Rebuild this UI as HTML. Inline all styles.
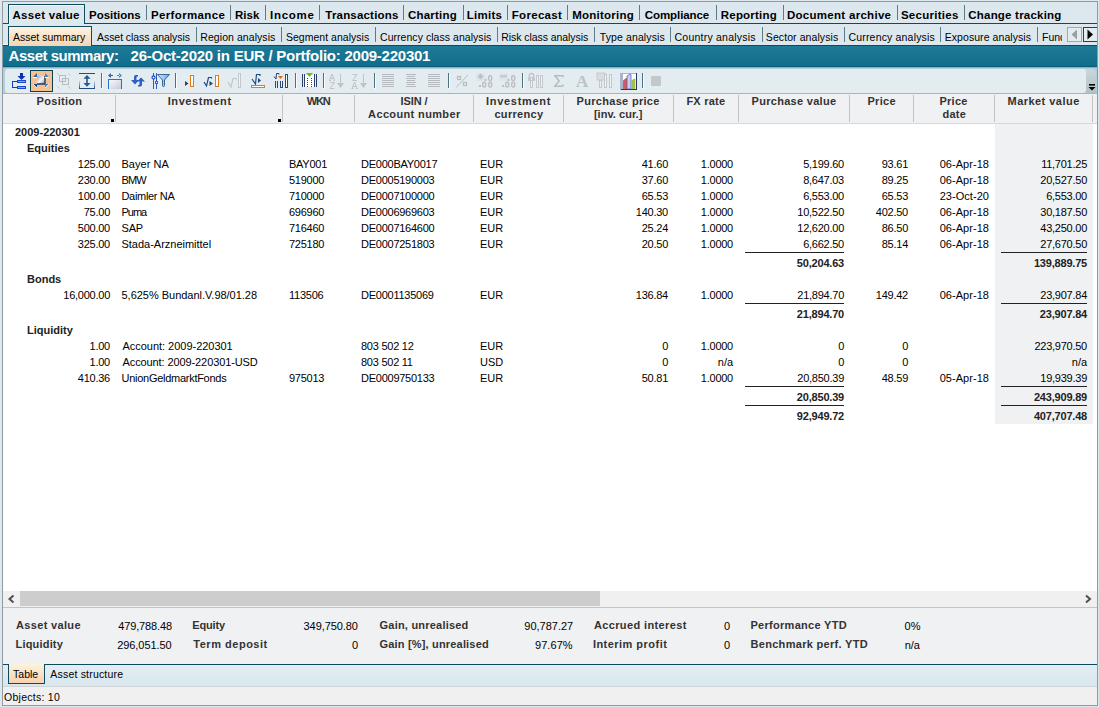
<!DOCTYPE html>
<html><head><meta charset="utf-8"><style>
html,body{margin:0;padding:0;width:1099px;height:707px;overflow:hidden;background:#dde8ee;font-family:"Liberation Sans",sans-serif;}
</style></head><body>
<div style="position:absolute;left:3px;top:23px;width:1094px;height:1px;background:#0f4b5e"></div><div style="position:absolute;left:8px;top:4px;width:77px;height:20px;background:#dde8ee;border:1px solid #0f4b5e;border-bottom:none;box-sizing:border-box;box-shadow:inset 1px 1px 0 #f4fafd;"></div><div style="position:absolute;top:8px;font:bold 11.5px/14px 'Liberation Sans',sans-serif;color:#000;white-space:nowrap;letter-spacing:0.3px;left:12.5px;">Asset value</div><div style="position:absolute;top:8px;font:bold 11.5px/14px 'Liberation Sans',sans-serif;color:#000;white-space:nowrap;left:89px;">Positions</div><div style="position:absolute;top:8px;font:bold 11.5px/14px 'Liberation Sans',sans-serif;color:#000;white-space:nowrap;letter-spacing:0.35px;left:151px;">Performance</div><div style="position:absolute;top:8px;font:bold 11.5px/14px 'Liberation Sans',sans-serif;color:#000;white-space:nowrap;left:235px;">Risk</div><div style="position:absolute;top:8px;font:bold 11.5px/14px 'Liberation Sans',sans-serif;color:#000;white-space:nowrap;letter-spacing:0.74px;left:270px;">Income</div><div style="position:absolute;top:8px;font:bold 11.5px/14px 'Liberation Sans',sans-serif;color:#000;white-space:nowrap;letter-spacing:0.191px;left:325.3px;">Transactions</div><div style="position:absolute;top:8px;font:bold 11.5px/14px 'Liberation Sans',sans-serif;color:#000;white-space:nowrap;letter-spacing:0.2px;left:408px;">Charting</div><div style="position:absolute;top:8px;font:bold 11.5px/14px 'Liberation Sans',sans-serif;color:#000;white-space:nowrap;letter-spacing:0.28px;left:466.7px;">Limits</div><div style="position:absolute;top:8px;font:bold 11.5px/14px 'Liberation Sans',sans-serif;color:#000;white-space:nowrap;letter-spacing:0.3px;left:511.79999999999995px;">Forecast</div><div style="position:absolute;top:8px;font:bold 11.5px/14px 'Liberation Sans',sans-serif;color:#000;white-space:nowrap;letter-spacing:0.233px;left:572.2px;">Monitoring</div><div style="position:absolute;top:8px;font:bold 11.5px/14px 'Liberation Sans',sans-serif;color:#000;white-space:nowrap;letter-spacing:-0.089px;left:644.8px;">Compliance</div><div style="position:absolute;top:8px;font:bold 11.5px/14px 'Liberation Sans',sans-serif;color:#000;white-space:nowrap;letter-spacing:0.2px;left:720.8px;">Reporting</div><div style="position:absolute;top:8px;font:bold 11.5px/14px 'Liberation Sans',sans-serif;color:#000;white-space:nowrap;letter-spacing:0.293px;left:786.9px;">Document archive</div><div style="position:absolute;top:8px;font:bold 11.5px/14px 'Liberation Sans',sans-serif;color:#000;white-space:nowrap;letter-spacing:0.278px;left:900.9px;">Securities</div><div style="position:absolute;top:8px;font:bold 11.5px/14px 'Liberation Sans',sans-serif;color:#000;white-space:nowrap;letter-spacing:0.207px;left:968.3px;">Change tracking</div><div style="position:absolute;left:146px;top:5px;width:1px;height:15px;background:#5e7c86"></div><div style="position:absolute;left:230px;top:5px;width:1px;height:15px;background:#5e7c86"></div><div style="position:absolute;left:265px;top:5px;width:1px;height:15px;background:#5e7c86"></div><div style="position:absolute;left:319px;top:5px;width:1px;height:15px;background:#5e7c86"></div><div style="position:absolute;left:403px;top:5px;width:1px;height:15px;background:#5e7c86"></div><div style="position:absolute;left:463px;top:5px;width:1px;height:15px;background:#5e7c86"></div><div style="position:absolute;left:507px;top:5px;width:1px;height:15px;background:#5e7c86"></div><div style="position:absolute;left:567px;top:5px;width:1px;height:15px;background:#5e7c86"></div><div style="position:absolute;left:639px;top:5px;width:1px;height:15px;background:#5e7c86"></div><div style="position:absolute;left:716px;top:5px;width:1px;height:15px;background:#5e7c86"></div><div style="position:absolute;left:783px;top:5px;width:1px;height:15px;background:#5e7c86"></div><div style="position:absolute;left:897px;top:5px;width:1px;height:15px;background:#5e7c86"></div><div style="position:absolute;left:964px;top:5px;width:1px;height:15px;background:#5e7c86"></div><div style="position:absolute;left:3px;top:45px;width:1094px;height:1px;background:#0f4b5e"></div><div style="position:absolute;left:3px;top:44px;width:5px;height:1px;background:#f6fafc"></div><div style="position:absolute;left:8px;top:26px;width:84px;height:20px;background:linear-gradient(#fdf3e0,#f7d4b4);border:1px solid #0f4b5e;border-bottom:none;box-sizing:border-box;"></div><div style="position:absolute;top:30px;font:normal 10.5px/14px 'Liberation Sans',sans-serif;color:#000;white-space:nowrap;left:13px;">Asset summary</div><div style="position:absolute;top:30px;font:normal 10.5px/14px 'Liberation Sans',sans-serif;color:#000;white-space:nowrap;letter-spacing:-0.053px;left:97px;">Asset class analysis</div><div style="position:absolute;top:30px;font:normal 10.5px/14px 'Liberation Sans',sans-serif;color:#000;white-space:nowrap;letter-spacing:0.064px;left:200.3px;">Region analysis</div><div style="position:absolute;top:30px;font:normal 10.5px/14px 'Liberation Sans',sans-serif;color:#000;white-space:nowrap;letter-spacing:0.027px;left:285.9px;">Segment analysis</div><div style="position:absolute;top:30px;font:normal 10.5px/14px 'Liberation Sans',sans-serif;color:#000;white-space:nowrap;letter-spacing:0.045px;left:380px;">Currency class analysis</div><div style="position:absolute;top:30px;font:normal 10.5px/14px 'Liberation Sans',sans-serif;color:#000;white-space:nowrap;letter-spacing:-0.061px;left:501.2px;">Risk class analysis</div><div style="position:absolute;top:30px;font:normal 10.5px/14px 'Liberation Sans',sans-serif;color:#000;white-space:nowrap;letter-spacing:0.108px;left:599.8px;">Type analysis</div><div style="position:absolute;top:30px;font:normal 10.5px/14px 'Liberation Sans',sans-serif;color:#000;white-space:nowrap;letter-spacing:0.233px;left:674.5px;">Country analysis</div><div style="position:absolute;top:30px;font:normal 10.5px/14px 'Liberation Sans',sans-serif;color:#000;white-space:nowrap;letter-spacing:0.086px;left:765.8px;">Sector analysis</div><div style="position:absolute;top:30px;font:normal 10.5px/14px 'Liberation Sans',sans-serif;color:#000;white-space:nowrap;letter-spacing:0.175px;left:848.5px;">Currency analysis</div><div style="position:absolute;top:30px;font:normal 10.5px/14px 'Liberation Sans',sans-serif;color:#000;white-space:nowrap;letter-spacing:0.069px;left:944.7px;">Exposure analysis</div><div style="position:absolute;left:1042px;top:30px;width:20px;height:14px;overflow:hidden;font:10.5px/14px 'Liberation Sans',sans-serif;white-space:nowrap">Funds</div><div style="position:absolute;left:196px;top:27px;width:1px;height:15px;background:#5e7c86"></div><div style="position:absolute;left:281px;top:27px;width:1px;height:15px;background:#5e7c86"></div><div style="position:absolute;left:375px;top:27px;width:1px;height:15px;background:#5e7c86"></div><div style="position:absolute;left:497px;top:27px;width:1px;height:15px;background:#5e7c86"></div><div style="position:absolute;left:594px;top:27px;width:1px;height:15px;background:#5e7c86"></div><div style="position:absolute;left:670px;top:27px;width:1px;height:15px;background:#5e7c86"></div><div style="position:absolute;left:762px;top:27px;width:1px;height:15px;background:#5e7c86"></div><div style="position:absolute;left:844px;top:27px;width:1px;height:15px;background:#5e7c86"></div><div style="position:absolute;left:940px;top:27px;width:1px;height:15px;background:#5e7c86"></div><div style="position:absolute;left:1037px;top:27px;width:1px;height:15px;background:#5e7c86"></div><div style="position:absolute;left:1067px;top:27px;width:15px;height:15px;border:1px solid #a0a8ac;box-sizing:border-box;background:#e4ecf0"></div><svg style="position:absolute;left:1067px;top:27px" width="15" height="15"><path d="M10 2.5 L4.5 7.5 L10 12.5Z" fill="#9a9fa2"/></svg><div style="position:absolute;left:1083px;top:27px;width:16px;height:15px;border:1px solid #0f4b5e;box-sizing:border-box;background:#e4ecf0"></div><svg style="position:absolute;left:1083px;top:27px" width="14" height="15"><path d="M4.5 2.5 L10 7.5 L4.5 12.5Z" fill="#000"/></svg><div style="position:absolute;left:3px;top:46px;width:1094px;height:21px;background:linear-gradient(#1f7b97 0px,#0f6d8c 20px,#0b5e7b 20px)"></div><div style="position:absolute;top:49px;font:bold 15px/14px 'Liberation Sans',sans-serif;color:#fff;white-space:nowrap;letter-spacing:-0.492px;left:8.6px;">Asset summary:</div><div style="position:absolute;top:49px;font:bold 15px/14px 'Liberation Sans',sans-serif;color:#fff;white-space:nowrap;letter-spacing:-0.245px;left:130.6px;">26-Oct-2020 in EUR / Portfolio: 2009-220301</div><div style="position:absolute;left:3px;top:67px;width:1094px;height:27px;background:#b3ced8"></div><div style="position:absolute;left:3px;top:67px;width:1094px;height:1px;background:#a0a9ad"></div><div style="position:absolute;left:1080px;top:69px;width:16px;height:24px;background:linear-gradient(#cbd6dc,#b3c1c8);border-radius:0 4px 0 0"></div><div style="position:absolute;left:5px;top:69px;width:1081px;height:24px;background:#e3ecf1;border-radius:3px 3px 3px 3px;"></div><div style="position:absolute;left:3px;top:93px;width:1094px;height:1px;background:#a9b3b8"></div><div style="position:absolute;left:3px;top:94px;width:1094px;height:29px;background:#f0f1f3"></div><div style="position:absolute;left:3px;top:123px;width:1094px;height:1px;background:#d8d8d8"></div><div style="position:absolute;left:115px;top:95px;width:1px;height:27px;background:#c4c4c4"></div><div style="position:absolute;left:282px;top:95px;width:1px;height:27px;background:#c4c4c4"></div><div style="position:absolute;left:354px;top:95px;width:1px;height:27px;background:#c4c4c4"></div><div style="position:absolute;left:473px;top:95px;width:1px;height:27px;background:#c4c4c4"></div><div style="position:absolute;left:563px;top:95px;width:1px;height:27px;background:#c4c4c4"></div><div style="position:absolute;left:673px;top:95px;width:1px;height:27px;background:#c4c4c4"></div><div style="position:absolute;left:738px;top:95px;width:1px;height:27px;background:#c4c4c4"></div><div style="position:absolute;left:849px;top:95px;width:1px;height:27px;background:#c4c4c4"></div><div style="position:absolute;left:913px;top:95px;width:1px;height:27px;background:#c4c4c4"></div><div style="position:absolute;left:994px;top:95px;width:1px;height:27px;background:#c4c4c4"></div><div style="position:absolute;left:1092px;top:95px;width:1px;height:27px;background:#c4c4c4"></div><div style="position:absolute;left:111px;top:119px;width:3px;height:3px;background:#000"></div><div style="position:absolute;left:278px;top:119px;width:3px;height:3px;background:#000"></div><div style="position:absolute;top:94px;font:bold 11px/14px 'Liberation Sans',sans-serif;color:#333;white-space:nowrap;letter-spacing:0.286px;left:36.6px;">Position</div><div style="position:absolute;top:94px;font:bold 11px/14px 'Liberation Sans',sans-serif;color:#333;white-space:nowrap;letter-spacing:0.589px;left:167.7px;">Investment</div><div style="position:absolute;top:94px;font:bold 11px/14px 'Liberation Sans',sans-serif;color:#333;white-space:nowrap;letter-spacing:-1.1px;left:306.7px;">WKN</div><div style="position:absolute;top:94px;font:bold 11px/14px 'Liberation Sans',sans-serif;color:#333;white-space:nowrap;letter-spacing:-0.06px;left:400.4px;">ISIN /</div><div style="position:absolute;top:107px;font:bold 11px/14px 'Liberation Sans',sans-serif;color:#333;white-space:nowrap;letter-spacing:0.362px;left:368.1px;">Account number</div><div style="position:absolute;top:94px;font:bold 11px/14px 'Liberation Sans',sans-serif;color:#333;white-space:nowrap;letter-spacing:0.7px;left:486px;">Investment</div><div style="position:absolute;top:107px;font:bold 11px/14px 'Liberation Sans',sans-serif;color:#333;white-space:nowrap;letter-spacing:0.329px;left:494.4px;">currency</div><div style="position:absolute;top:94px;font:bold 11px/14px 'Liberation Sans',sans-serif;color:#333;white-space:nowrap;letter-spacing:0.3px;left:576.6px;">Purchase price</div><div style="position:absolute;top:107px;font:bold 11px/14px 'Liberation Sans',sans-serif;color:#333;white-space:nowrap;letter-spacing:0.04px;left:593.9px;">[inv. cur.]</div><div style="position:absolute;top:94px;font:bold 11px/14px 'Liberation Sans',sans-serif;color:#333;white-space:nowrap;letter-spacing:0.233px;left:686.4px;">FX rate</div><div style="position:absolute;top:94px;font:bold 11px/14px 'Liberation Sans',sans-serif;color:#333;white-space:nowrap;letter-spacing:0.285px;left:751.6px;">Purchase value</div><div style="position:absolute;top:94px;font:bold 11px/14px 'Liberation Sans',sans-serif;color:#333;white-space:nowrap;letter-spacing:0.325px;left:867.4px;">Price</div><div style="position:absolute;top:94px;font:bold 11px/14px 'Liberation Sans',sans-serif;color:#333;white-space:nowrap;letter-spacing:0.25px;left:939.5px;">Price</div><div style="position:absolute;top:107px;font:bold 11px/14px 'Liberation Sans',sans-serif;color:#333;white-space:nowrap;letter-spacing:0.3px;left:942.4px;">date</div><div style="position:absolute;top:94px;font:bold 11px/14px 'Liberation Sans',sans-serif;color:#333;white-space:nowrap;letter-spacing:0.464px;left:1007.5px;">Market value</div><div style="position:absolute;left:3px;top:124px;width:1094px;height:467px;background:#fff"></div><div style="position:absolute;left:995px;top:124px;width:98px;height:300px;background:#f0f1f3"></div><div style="position:absolute;top:125px;font:bold 11px/14px 'Liberation Sans',sans-serif;color:#222;white-space:nowrap;left:15px;">2009-220301</div><div style="position:absolute;top:141px;font:bold 11px/14px 'Liberation Sans',sans-serif;color:#222;white-space:nowrap;left:27px;">Equities</div><div style="position:absolute;top:157px;font:normal 11px/14px 'Liberation Sans',sans-serif;color:#000;white-space:nowrap;letter-spacing:-0.25px;right:989px;">125.00</div><div style="position:absolute;top:157px;font:normal 11px/14px 'Liberation Sans',sans-serif;color:#000;white-space:nowrap;letter-spacing:0.029px;left:121.5px;">Bayer NA</div><div style="position:absolute;top:157px;font:normal 11px/14px 'Liberation Sans',sans-serif;color:#000;white-space:nowrap;letter-spacing:-0.25px;left:289px;">BAY001</div><div style="position:absolute;top:157px;font:normal 11px/14px 'Liberation Sans',sans-serif;color:#000;white-space:nowrap;letter-spacing:-0.25px;left:361px;">DE000BAY0017</div><div style="position:absolute;top:157px;font:normal 11px/14px 'Liberation Sans',sans-serif;color:#000;white-space:nowrap;letter-spacing:-0.05px;left:480px;">EUR</div><div style="position:absolute;top:157px;font:normal 11px/14px 'Liberation Sans',sans-serif;color:#000;white-space:nowrap;letter-spacing:-0.25px;right:431px;">41.60</div><div style="position:absolute;top:157px;font:normal 11px/14px 'Liberation Sans',sans-serif;color:#000;white-space:nowrap;letter-spacing:-0.25px;right:366px;">1.0000</div><div style="position:absolute;top:157px;font:normal 11px/14px 'Liberation Sans',sans-serif;color:#000;white-space:nowrap;letter-spacing:-0.25px;right:255px;">5,199.60</div><div style="position:absolute;top:157px;font:normal 11px/14px 'Liberation Sans',sans-serif;color:#000;white-space:nowrap;letter-spacing:-0.25px;right:191px;">93.61</div><div style="position:absolute;top:157px;font:normal 11px/14px 'Liberation Sans',sans-serif;color:#000;white-space:nowrap;letter-spacing:0.05px;right:110px;">06-Apr-18</div><div style="position:absolute;top:157px;font:normal 11px/14px 'Liberation Sans',sans-serif;color:#000;white-space:nowrap;letter-spacing:-0.25px;right:12px;">11,701.25</div><div style="position:absolute;top:173px;font:normal 11px/14px 'Liberation Sans',sans-serif;color:#000;white-space:nowrap;letter-spacing:-0.25px;right:989px;">230.00</div><div style="position:absolute;top:173px;font:normal 11px/14px 'Liberation Sans',sans-serif;color:#000;white-space:nowrap;letter-spacing:-0.9px;left:121.5px;">BMW</div><div style="position:absolute;top:173px;font:normal 11px/14px 'Liberation Sans',sans-serif;color:#000;white-space:nowrap;letter-spacing:-0.25px;left:289px;">519000</div><div style="position:absolute;top:173px;font:normal 11px/14px 'Liberation Sans',sans-serif;color:#000;white-space:nowrap;letter-spacing:-0.25px;left:361px;">DE0005190003</div><div style="position:absolute;top:173px;font:normal 11px/14px 'Liberation Sans',sans-serif;color:#000;white-space:nowrap;letter-spacing:-0.05px;left:480px;">EUR</div><div style="position:absolute;top:173px;font:normal 11px/14px 'Liberation Sans',sans-serif;color:#000;white-space:nowrap;letter-spacing:-0.25px;right:431px;">37.60</div><div style="position:absolute;top:173px;font:normal 11px/14px 'Liberation Sans',sans-serif;color:#000;white-space:nowrap;letter-spacing:-0.25px;right:366px;">1.0000</div><div style="position:absolute;top:173px;font:normal 11px/14px 'Liberation Sans',sans-serif;color:#000;white-space:nowrap;letter-spacing:-0.25px;right:255px;">8,647.03</div><div style="position:absolute;top:173px;font:normal 11px/14px 'Liberation Sans',sans-serif;color:#000;white-space:nowrap;letter-spacing:-0.25px;right:191px;">89.25</div><div style="position:absolute;top:173px;font:normal 11px/14px 'Liberation Sans',sans-serif;color:#000;white-space:nowrap;letter-spacing:0.05px;right:110px;">06-Apr-18</div><div style="position:absolute;top:173px;font:normal 11px/14px 'Liberation Sans',sans-serif;color:#000;white-space:nowrap;letter-spacing:-0.25px;right:12px;">20,527.50</div><div style="position:absolute;top:189px;font:normal 11px/14px 'Liberation Sans',sans-serif;color:#000;white-space:nowrap;letter-spacing:-0.25px;right:989px;">100.00</div><div style="position:absolute;top:189px;font:normal 11px/14px 'Liberation Sans',sans-serif;color:#000;white-space:nowrap;letter-spacing:-0.322px;left:121.5px;">Daimler NA</div><div style="position:absolute;top:189px;font:normal 11px/14px 'Liberation Sans',sans-serif;color:#000;white-space:nowrap;letter-spacing:-0.25px;left:289px;">710000</div><div style="position:absolute;top:189px;font:normal 11px/14px 'Liberation Sans',sans-serif;color:#000;white-space:nowrap;letter-spacing:-0.25px;left:361px;">DE0007100000</div><div style="position:absolute;top:189px;font:normal 11px/14px 'Liberation Sans',sans-serif;color:#000;white-space:nowrap;letter-spacing:-0.05px;left:480px;">EUR</div><div style="position:absolute;top:189px;font:normal 11px/14px 'Liberation Sans',sans-serif;color:#000;white-space:nowrap;letter-spacing:-0.25px;right:431px;">65.53</div><div style="position:absolute;top:189px;font:normal 11px/14px 'Liberation Sans',sans-serif;color:#000;white-space:nowrap;letter-spacing:-0.25px;right:366px;">1.0000</div><div style="position:absolute;top:189px;font:normal 11px/14px 'Liberation Sans',sans-serif;color:#000;white-space:nowrap;letter-spacing:-0.25px;right:255px;">6,553.00</div><div style="position:absolute;top:189px;font:normal 11px/14px 'Liberation Sans',sans-serif;color:#000;white-space:nowrap;letter-spacing:-0.25px;right:191px;">65.53</div><div style="position:absolute;top:189px;font:normal 11px/14px 'Liberation Sans',sans-serif;color:#000;white-space:nowrap;letter-spacing:0.05px;right:110px;">23-Oct-20</div><div style="position:absolute;top:189px;font:normal 11px/14px 'Liberation Sans',sans-serif;color:#000;white-space:nowrap;letter-spacing:-0.25px;right:12px;">6,553.00</div><div style="position:absolute;top:205px;font:normal 11px/14px 'Liberation Sans',sans-serif;color:#000;white-space:nowrap;letter-spacing:-0.25px;right:989px;">75.00</div><div style="position:absolute;top:205px;font:normal 11px/14px 'Liberation Sans',sans-serif;color:#000;white-space:nowrap;letter-spacing:-1.033px;left:121.5px;">Puma</div><div style="position:absolute;top:205px;font:normal 11px/14px 'Liberation Sans',sans-serif;color:#000;white-space:nowrap;letter-spacing:-0.25px;left:289px;">696960</div><div style="position:absolute;top:205px;font:normal 11px/14px 'Liberation Sans',sans-serif;color:#000;white-space:nowrap;letter-spacing:-0.25px;left:361px;">DE0006969603</div><div style="position:absolute;top:205px;font:normal 11px/14px 'Liberation Sans',sans-serif;color:#000;white-space:nowrap;letter-spacing:-0.05px;left:480px;">EUR</div><div style="position:absolute;top:205px;font:normal 11px/14px 'Liberation Sans',sans-serif;color:#000;white-space:nowrap;letter-spacing:-0.25px;right:431px;">140.30</div><div style="position:absolute;top:205px;font:normal 11px/14px 'Liberation Sans',sans-serif;color:#000;white-space:nowrap;letter-spacing:-0.25px;right:366px;">1.0000</div><div style="position:absolute;top:205px;font:normal 11px/14px 'Liberation Sans',sans-serif;color:#000;white-space:nowrap;letter-spacing:-0.25px;right:255px;">10,522.50</div><div style="position:absolute;top:205px;font:normal 11px/14px 'Liberation Sans',sans-serif;color:#000;white-space:nowrap;letter-spacing:-0.25px;right:191px;">402.50</div><div style="position:absolute;top:205px;font:normal 11px/14px 'Liberation Sans',sans-serif;color:#000;white-space:nowrap;letter-spacing:0.05px;right:110px;">06-Apr-18</div><div style="position:absolute;top:205px;font:normal 11px/14px 'Liberation Sans',sans-serif;color:#000;white-space:nowrap;letter-spacing:-0.25px;right:12px;">30,187.50</div><div style="position:absolute;top:221px;font:normal 11px/14px 'Liberation Sans',sans-serif;color:#000;white-space:nowrap;letter-spacing:-0.25px;right:989px;">500.00</div><div style="position:absolute;top:221px;font:normal 11px/14px 'Liberation Sans',sans-serif;color:#000;white-space:nowrap;letter-spacing:-0.2px;left:121.5px;">SAP</div><div style="position:absolute;top:221px;font:normal 11px/14px 'Liberation Sans',sans-serif;color:#000;white-space:nowrap;letter-spacing:-0.25px;left:289px;">716460</div><div style="position:absolute;top:221px;font:normal 11px/14px 'Liberation Sans',sans-serif;color:#000;white-space:nowrap;letter-spacing:-0.25px;left:361px;">DE0007164600</div><div style="position:absolute;top:221px;font:normal 11px/14px 'Liberation Sans',sans-serif;color:#000;white-space:nowrap;letter-spacing:-0.05px;left:480px;">EUR</div><div style="position:absolute;top:221px;font:normal 11px/14px 'Liberation Sans',sans-serif;color:#000;white-space:nowrap;letter-spacing:-0.25px;right:431px;">25.24</div><div style="position:absolute;top:221px;font:normal 11px/14px 'Liberation Sans',sans-serif;color:#000;white-space:nowrap;letter-spacing:-0.25px;right:366px;">1.0000</div><div style="position:absolute;top:221px;font:normal 11px/14px 'Liberation Sans',sans-serif;color:#000;white-space:nowrap;letter-spacing:-0.25px;right:255px;">12,620.00</div><div style="position:absolute;top:221px;font:normal 11px/14px 'Liberation Sans',sans-serif;color:#000;white-space:nowrap;letter-spacing:-0.25px;right:191px;">86.50</div><div style="position:absolute;top:221px;font:normal 11px/14px 'Liberation Sans',sans-serif;color:#000;white-space:nowrap;letter-spacing:0.05px;right:110px;">06-Apr-18</div><div style="position:absolute;top:221px;font:normal 11px/14px 'Liberation Sans',sans-serif;color:#000;white-space:nowrap;letter-spacing:-0.25px;right:12px;">43,250.00</div><div style="position:absolute;top:237px;font:normal 11px/14px 'Liberation Sans',sans-serif;color:#000;white-space:nowrap;letter-spacing:-0.25px;right:989px;">325.00</div><div style="position:absolute;top:237px;font:normal 11px/14px 'Liberation Sans',sans-serif;color:#000;white-space:nowrap;letter-spacing:-0.012px;left:121.5px;">Stada-Arzneimittel</div><div style="position:absolute;top:237px;font:normal 11px/14px 'Liberation Sans',sans-serif;color:#000;white-space:nowrap;letter-spacing:-0.25px;left:289px;">725180</div><div style="position:absolute;top:237px;font:normal 11px/14px 'Liberation Sans',sans-serif;color:#000;white-space:nowrap;letter-spacing:-0.25px;left:361px;">DE0007251803</div><div style="position:absolute;top:237px;font:normal 11px/14px 'Liberation Sans',sans-serif;color:#000;white-space:nowrap;letter-spacing:-0.05px;left:480px;">EUR</div><div style="position:absolute;top:237px;font:normal 11px/14px 'Liberation Sans',sans-serif;color:#000;white-space:nowrap;letter-spacing:-0.25px;right:431px;">20.50</div><div style="position:absolute;top:237px;font:normal 11px/14px 'Liberation Sans',sans-serif;color:#000;white-space:nowrap;letter-spacing:-0.25px;right:366px;">1.0000</div><div style="position:absolute;top:237px;font:normal 11px/14px 'Liberation Sans',sans-serif;color:#000;white-space:nowrap;letter-spacing:-0.25px;right:255px;">6,662.50</div><div style="position:absolute;top:237px;font:normal 11px/14px 'Liberation Sans',sans-serif;color:#000;white-space:nowrap;letter-spacing:-0.25px;right:191px;">85.14</div><div style="position:absolute;top:237px;font:normal 11px/14px 'Liberation Sans',sans-serif;color:#000;white-space:nowrap;letter-spacing:0.05px;right:110px;">06-Apr-18</div><div style="position:absolute;top:237px;font:normal 11px/14px 'Liberation Sans',sans-serif;color:#000;white-space:nowrap;letter-spacing:-0.25px;right:12px;">27,670.50</div><div style="position:absolute;left:745px;top:252px;width:99px;height:1px;background:#222"></div><div style="position:absolute;left:1001px;top:252px;width:86px;height:1px;background:#222"></div><div style="position:absolute;top:256px;font:bold 11px/14px 'Liberation Sans',sans-serif;color:#222;white-space:nowrap;letter-spacing:-0.2px;right:255px;">50,204.63</div><div style="position:absolute;top:256px;font:bold 11px/14px 'Liberation Sans',sans-serif;color:#222;white-space:nowrap;letter-spacing:-0.2px;right:12px;">139,889.75</div><div style="position:absolute;top:272px;font:bold 11px/14px 'Liberation Sans',sans-serif;color:#222;white-space:nowrap;left:27px;">Bonds</div><div style="position:absolute;top:288px;font:normal 11px/14px 'Liberation Sans',sans-serif;color:#000;white-space:nowrap;letter-spacing:-0.25px;right:989px;">16,000.00</div><div style="position:absolute;top:288px;font:normal 11px/14px 'Liberation Sans',sans-serif;color:#000;white-space:nowrap;letter-spacing:-0.017px;left:121.5px;">5,625% Bundanl.V.98/01.28</div><div style="position:absolute;top:288px;font:normal 11px/14px 'Liberation Sans',sans-serif;color:#000;white-space:nowrap;letter-spacing:-0.25px;left:289px;">113506</div><div style="position:absolute;top:288px;font:normal 11px/14px 'Liberation Sans',sans-serif;color:#000;white-space:nowrap;letter-spacing:-0.25px;left:361px;">DE0001135069</div><div style="position:absolute;top:288px;font:normal 11px/14px 'Liberation Sans',sans-serif;color:#000;white-space:nowrap;letter-spacing:-0.05px;left:480px;">EUR</div><div style="position:absolute;top:288px;font:normal 11px/14px 'Liberation Sans',sans-serif;color:#000;white-space:nowrap;letter-spacing:-0.25px;right:431px;">136.84</div><div style="position:absolute;top:288px;font:normal 11px/14px 'Liberation Sans',sans-serif;color:#000;white-space:nowrap;letter-spacing:-0.25px;right:366px;">1.0000</div><div style="position:absolute;top:288px;font:normal 11px/14px 'Liberation Sans',sans-serif;color:#000;white-space:nowrap;letter-spacing:-0.25px;right:255px;">21,894.70</div><div style="position:absolute;top:288px;font:normal 11px/14px 'Liberation Sans',sans-serif;color:#000;white-space:nowrap;letter-spacing:-0.25px;right:191px;">149.42</div><div style="position:absolute;top:288px;font:normal 11px/14px 'Liberation Sans',sans-serif;color:#000;white-space:nowrap;letter-spacing:0.05px;right:110px;">06-Apr-18</div><div style="position:absolute;top:288px;font:normal 11px/14px 'Liberation Sans',sans-serif;color:#000;white-space:nowrap;letter-spacing:-0.25px;right:12px;">23,907.84</div><div style="position:absolute;left:745px;top:303px;width:99px;height:1px;background:#222"></div><div style="position:absolute;left:1001px;top:303px;width:86px;height:1px;background:#222"></div><div style="position:absolute;top:307px;font:bold 11px/14px 'Liberation Sans',sans-serif;color:#222;white-space:nowrap;letter-spacing:-0.2px;right:255px;">21,894.70</div><div style="position:absolute;top:307px;font:bold 11px/14px 'Liberation Sans',sans-serif;color:#222;white-space:nowrap;letter-spacing:-0.2px;right:12px;">23,907.84</div><div style="position:absolute;top:323px;font:bold 11px/14px 'Liberation Sans',sans-serif;color:#222;white-space:nowrap;left:27px;">Liquidity</div><div style="position:absolute;top:339px;font:normal 11px/14px 'Liberation Sans',sans-serif;color:#000;white-space:nowrap;letter-spacing:-0.25px;right:989px;">1.00</div><div style="position:absolute;top:339px;font:normal 11px/14px 'Liberation Sans',sans-serif;color:#000;white-space:nowrap;letter-spacing:-0.026px;left:122.5px;">Account: 2009-220301</div><div style="position:absolute;top:339px;font:normal 11px/14px 'Liberation Sans',sans-serif;color:#000;white-space:nowrap;letter-spacing:-0.25px;left:361px;">803 502 12</div><div style="position:absolute;top:339px;font:normal 11px/14px 'Liberation Sans',sans-serif;color:#000;white-space:nowrap;letter-spacing:-0.05px;left:480px;">EUR</div><div style="position:absolute;top:339px;font:normal 11px/14px 'Liberation Sans',sans-serif;color:#000;white-space:nowrap;letter-spacing:-0.25px;right:431px;">0</div><div style="position:absolute;top:339px;font:normal 11px/14px 'Liberation Sans',sans-serif;color:#000;white-space:nowrap;letter-spacing:-0.25px;right:366px;">1.0000</div><div style="position:absolute;top:339px;font:normal 11px/14px 'Liberation Sans',sans-serif;color:#000;white-space:nowrap;letter-spacing:-0.25px;right:255px;">0</div><div style="position:absolute;top:339px;font:normal 11px/14px 'Liberation Sans',sans-serif;color:#000;white-space:nowrap;letter-spacing:-0.25px;right:191px;">0</div><div style="position:absolute;top:339px;font:normal 11px/14px 'Liberation Sans',sans-serif;color:#000;white-space:nowrap;letter-spacing:-0.25px;right:12px;">223,970.50</div><div style="position:absolute;top:355px;font:normal 11px/14px 'Liberation Sans',sans-serif;color:#000;white-space:nowrap;letter-spacing:-0.25px;right:989px;">1.00</div><div style="position:absolute;top:355px;font:normal 11px/14px 'Liberation Sans',sans-serif;color:#000;white-space:nowrap;letter-spacing:-0.1px;left:122.5px;">Account: 2009-220301-USD</div><div style="position:absolute;top:355px;font:normal 11px/14px 'Liberation Sans',sans-serif;color:#000;white-space:nowrap;letter-spacing:-0.25px;left:361px;">803 502 11</div><div style="position:absolute;top:355px;font:normal 11px/14px 'Liberation Sans',sans-serif;color:#000;white-space:nowrap;letter-spacing:-0.05px;left:480px;">USD</div><div style="position:absolute;top:355px;font:normal 11px/14px 'Liberation Sans',sans-serif;color:#000;white-space:nowrap;letter-spacing:-0.25px;right:431px;">0</div><div style="position:absolute;top:355px;font:normal 11px/14px 'Liberation Sans',sans-serif;color:#000;white-space:nowrap;letter-spacing:-0.05px;right:366px;">n/a</div><div style="position:absolute;top:355px;font:normal 11px/14px 'Liberation Sans',sans-serif;color:#000;white-space:nowrap;letter-spacing:-0.25px;right:255px;">0</div><div style="position:absolute;top:355px;font:normal 11px/14px 'Liberation Sans',sans-serif;color:#000;white-space:nowrap;letter-spacing:-0.25px;right:191px;">0</div><div style="position:absolute;top:355px;font:normal 11px/14px 'Liberation Sans',sans-serif;color:#000;white-space:nowrap;letter-spacing:-0.05px;right:12px;">n/a</div><div style="position:absolute;top:371px;font:normal 11px/14px 'Liberation Sans',sans-serif;color:#000;white-space:nowrap;letter-spacing:-0.25px;right:989px;">410.36</div><div style="position:absolute;top:371px;font:normal 11px/14px 'Liberation Sans',sans-serif;color:#000;white-space:nowrap;letter-spacing:-0.272px;left:121.5px;">UnionGeldmarktFonds</div><div style="position:absolute;top:371px;font:normal 11px/14px 'Liberation Sans',sans-serif;color:#000;white-space:nowrap;letter-spacing:-0.25px;left:289px;">975013</div><div style="position:absolute;top:371px;font:normal 11px/14px 'Liberation Sans',sans-serif;color:#000;white-space:nowrap;letter-spacing:-0.25px;left:361px;">DE0009750133</div><div style="position:absolute;top:371px;font:normal 11px/14px 'Liberation Sans',sans-serif;color:#000;white-space:nowrap;letter-spacing:-0.05px;left:480px;">EUR</div><div style="position:absolute;top:371px;font:normal 11px/14px 'Liberation Sans',sans-serif;color:#000;white-space:nowrap;letter-spacing:-0.25px;right:431px;">50.81</div><div style="position:absolute;top:371px;font:normal 11px/14px 'Liberation Sans',sans-serif;color:#000;white-space:nowrap;letter-spacing:-0.25px;right:366px;">1.0000</div><div style="position:absolute;top:371px;font:normal 11px/14px 'Liberation Sans',sans-serif;color:#000;white-space:nowrap;letter-spacing:-0.25px;right:255px;">20,850.39</div><div style="position:absolute;top:371px;font:normal 11px/14px 'Liberation Sans',sans-serif;color:#000;white-space:nowrap;letter-spacing:-0.25px;right:191px;">48.59</div><div style="position:absolute;top:371px;font:normal 11px/14px 'Liberation Sans',sans-serif;color:#000;white-space:nowrap;letter-spacing:0.05px;right:110px;">05-Apr-18</div><div style="position:absolute;top:371px;font:normal 11px/14px 'Liberation Sans',sans-serif;color:#000;white-space:nowrap;letter-spacing:-0.25px;right:12px;">19,939.39</div><div style="position:absolute;left:745px;top:386px;width:99px;height:1px;background:#222"></div><div style="position:absolute;left:1001px;top:386px;width:86px;height:1px;background:#222"></div><div style="position:absolute;top:390px;font:bold 11px/14px 'Liberation Sans',sans-serif;color:#222;white-space:nowrap;letter-spacing:-0.2px;right:255px;">20,850.39</div><div style="position:absolute;top:390px;font:bold 11px/14px 'Liberation Sans',sans-serif;color:#222;white-space:nowrap;letter-spacing:-0.2px;right:12px;">243,909.89</div><div style="position:absolute;left:745px;top:405px;width:99px;height:1px;background:#222"></div><div style="position:absolute;left:1001px;top:405px;width:86px;height:1px;background:#222"></div><div style="position:absolute;top:409px;font:bold 11px/14px 'Liberation Sans',sans-serif;color:#222;white-space:nowrap;letter-spacing:-0.2px;right:255px;">92,949.72</div><div style="position:absolute;top:409px;font:bold 11px/14px 'Liberation Sans',sans-serif;color:#222;white-space:nowrap;letter-spacing:-0.2px;right:12px;">407,707.48</div><div style="position:absolute;left:3px;top:591px;width:1094px;height:16px;background:#f0f0f0"></div><div style="position:absolute;left:20px;top:591px;width:580px;height:15px;background:#cdcdcd"></div><svg style="position:absolute;left:3px;top:591px" width="16" height="16"><path d="M10.5 4.5 L6.5 8 L10.5 11.5" stroke="#505050" stroke-width="2" fill="none"/></svg><svg style="position:absolute;left:1080px;top:591px" width="16" height="16"><path d="M6 4.5 L10 8 L6 11.5" stroke="#505050" stroke-width="2" fill="none"/></svg><div style="position:absolute;left:3px;top:607px;width:1094px;height:1px;background:#c4c4c4"></div><div style="position:absolute;left:3px;top:608px;width:1094px;height:56px;background:#f0f1f3"></div><div style="position:absolute;top:618px;font:bold 11px/14px 'Liberation Sans',sans-serif;color:#333;white-space:nowrap;letter-spacing:0.34px;left:16px;">Asset value</div><div style="position:absolute;top:637px;font:bold 11px/14px 'Liberation Sans',sans-serif;color:#333;white-space:nowrap;letter-spacing:0.175px;left:15.600000000000001px;">Liquidity</div><div style="position:absolute;top:618px;font:bold 11px/14px 'Liberation Sans',sans-serif;color:#333;white-space:nowrap;letter-spacing:-0.16px;left:192.3px;">Equity</div><div style="position:absolute;top:637px;font:bold 11px/14px 'Liberation Sans',sans-serif;color:#333;white-space:nowrap;letter-spacing:0.518px;left:193.3px;">Term deposit</div><div style="position:absolute;top:618px;font:bold 11px/14px 'Liberation Sans',sans-serif;color:#333;white-space:nowrap;letter-spacing:0.207px;left:379.6px;">Gain, unrealised</div><div style="position:absolute;top:637px;font:bold 11px/14px 'Liberation Sans',sans-serif;color:#333;white-space:nowrap;letter-spacing:0.174px;left:379.6px;">Gain [%], unrealised</div><div style="position:absolute;top:618px;font:bold 11px/14px 'Liberation Sans',sans-serif;color:#333;white-space:nowrap;letter-spacing:0.38px;left:593.9px;">Accrued interest</div><div style="position:absolute;top:637px;font:bold 11px/14px 'Liberation Sans',sans-serif;color:#333;white-space:nowrap;letter-spacing:0.469px;left:592.9px;">Interim profit</div><div style="position:absolute;top:618px;font:bold 11px/14px 'Liberation Sans',sans-serif;color:#333;white-space:nowrap;letter-spacing:0.286px;left:750.5px;">Performance YTD</div><div style="position:absolute;top:637px;font:bold 11px/14px 'Liberation Sans',sans-serif;color:#333;white-space:nowrap;letter-spacing:0.306px;left:750.5px;">Benchmark perf. YTD</div><div style="position:absolute;top:619px;font:normal 11px/14px 'Liberation Sans',sans-serif;color:#000;white-space:nowrap;letter-spacing:-0.133px;left:118.2px;">479,788.48</div><div style="position:absolute;top:638px;font:normal 11px/14px 'Liberation Sans',sans-serif;color:#000;white-space:nowrap;letter-spacing:-0.056px;left:117.2px;">296,051.50</div><div style="position:absolute;top:619px;font:normal 11px/14px 'Liberation Sans',sans-serif;color:#000;white-space:nowrap;letter-spacing:-0.089px;left:303.6px;">349,750.80</div><div style="position:absolute;top:619px;font:normal 11px/14px 'Liberation Sans',sans-serif;color:#000;white-space:nowrap;left:524.3px;">90,787.27</div><div style="position:absolute;top:638px;font:normal 11px/14px 'Liberation Sans',sans-serif;color:#000;white-space:nowrap;letter-spacing:0.06px;left:535px;">97.67%</div><div style="position:absolute;top:619px;font:normal 11px/14px 'Liberation Sans',sans-serif;color:#000;white-space:nowrap;left:904.6px;">0%</div><div style="position:absolute;top:638px;font:normal 11px/14px 'Liberation Sans',sans-serif;color:#000;white-space:nowrap;letter-spacing:-0.05px;left:904.7px;">n/a</div><div style="position:absolute;top:638px;font:normal 11px/14px 'Liberation Sans',sans-serif;color:#000;white-space:nowrap;right:741px;">0</div><div style="position:absolute;top:619px;font:normal 11px/14px 'Liberation Sans',sans-serif;color:#000;white-space:nowrap;right:369px;">0</div><div style="position:absolute;top:638px;font:normal 11px/14px 'Liberation Sans',sans-serif;color:#000;white-space:nowrap;right:369px;">0</div><div style="position:absolute;left:3px;top:664px;width:1094px;height:1px;background:#0f4b5e"></div><div style="position:absolute;left:3px;top:665px;width:1094px;height:21px;background:linear-gradient(#e3eef3,#d8e7ee)"></div><div style="position:absolute;left:8px;top:664px;width:37px;height:20px;background:linear-gradient(#fdf3dc,#f7d2b2);border:1px solid #0f4b5e;border-top:none;box-sizing:border-box;"></div><div style="position:absolute;top:667px;font:normal 10.5px/14px 'Liberation Sans',sans-serif;color:#000;white-space:nowrap;letter-spacing:0.025px;left:13px;">Table</div><div style="position:absolute;top:667px;font:normal 10.5px/14px 'Liberation Sans',sans-serif;color:#000;white-space:nowrap;letter-spacing:0.193px;left:50.3px;">Asset structure</div><div style="position:absolute;left:3px;top:686px;width:1094px;height:1px;background:#d0d4d6"></div><div style="position:absolute;left:3px;top:687px;width:1094px;height:18px;background:#f0f0f0"></div><div style="position:absolute;top:690px;font:normal 10.5px/14px 'Liberation Sans',sans-serif;color:#000;white-space:nowrap;letter-spacing:0.27px;left:4px;">Objects: 10</div>
<svg style="position:absolute;left:0;top:0" width="1099" height="100" viewBox="0 0 1099 100">
<defs>
<linearGradient id="gsq" x1="0" y1="0" x2="1" y2="1"><stop offset="0" stop-color="#9aa6b8"/><stop offset="0.5" stop-color="#f4f6fa"/><stop offset="1" stop-color="#7f8ca4"/></linearGradient>
<linearGradient id="gbox" x1="0" y1="0" x2="1" y2="1"><stop offset="0" stop-color="#ffffff"/><stop offset="1" stop-color="#c4c6dc"/></linearGradient>
<linearGradient id="gbr" x1="0" y1="0" x2="0" y2="1"><stop offset="0" stop-color="#c8dcf4"/><stop offset="1" stop-color="#1f4a80"/></linearGradient>
<linearGradient id="gfun" x1="0" y1="0" x2="1" y2="0"><stop offset="0" stop-color="#d8ecfc"/><stop offset="1" stop-color="#5aa6ee"/></linearGradient>
<linearGradient id="gchart" x1="0" y1="0" x2="1" y2="1"><stop offset="0" stop-color="#a8b4c8"/><stop offset="1" stop-color="#e8ecf4"/></linearGradient>
</defs>
<g shape-rendering="crispEdges">
<!-- separators -->
<g fill="#4d727e">
<rect x="101" y="73" width="1" height="15"/><rect x="175" y="73" width="1" height="15"/>
<rect x="295" y="73" width="1" height="15"/><rect x="323" y="73" width="1" height="15"/>
<rect x="374" y="73" width="1" height="15"/><rect x="448" y="73" width="1" height="15"/>
<rect x="522" y="73" width="1" height="15"/><rect x="642" y="73" width="1" height="15"/>
</g>
<g fill="#fafcfd">
<rect x="102" y="74" width="1" height="15"/><rect x="176" y="74" width="1" height="15"/>
<rect x="296" y="74" width="1" height="15"/><rect x="324" y="74" width="1" height="15"/>
<rect x="375" y="74" width="1" height="15"/><rect x="449" y="74" width="1" height="15"/>
<rect x="523" y="74" width="1" height="15"/><rect x="643" y="74" width="1" height="15"/>
</g>
<!-- icon1 tree+arrow -->
<rect x="20" y="73" width="3" height="3" fill="#0a32b8"/>
<rect x="12" y="81" width="1" height="7" fill="#1040c8"/>
<rect x="12" y="81" width="5" height="1" fill="#1040c8"/>
<rect x="12" y="87" width="5" height="1" fill="#1040c8"/>
<rect x="17" y="80" width="9" height="3" fill="#1a48d0"/>
<rect x="18" y="81" width="7" height="1" fill="#7ab4f4"/>
<rect x="17" y="86" width="9" height="3" fill="#1a48d0"/>
<rect x="18" y="87" width="7" height="1" fill="#7ab4f4"/>
</g>
<path d="M17.5 76 H25.5 L21.5 80Z" fill="#0a32b8"/>
<!-- icon2 highlighted -->
<rect x="30.5" y="70.5" width="22" height="21" fill="#f4c193" stroke="#0e3f4f" stroke-width="1"/>
<rect x="37" y="76" width="8" height="8" fill="url(#gsq)" shape-rendering="crispEdges"/>
<path d="M45 76 V84 H37" stroke="#1c3a6a" stroke-width="1.4" fill="none"/>
<path d="M33 77 L37 73 V77Z" fill="#2a6aa8"/><path d="M33 77.5 H37" stroke="#fff" stroke-width="1"/>
<path d="M49 77 L45 73 V77Z" fill="#3a8ac8"/><path d="M45 77.5 H49" stroke="#fff" stroke-width="1"/>
<path d="M33 84 L37 88 V84Z" fill="#1f4a80"/><path d="M33 84 L37 88" stroke="#fff" stroke-width="0.8"/>
<path d="M49 84 L45 88 V84Z" fill="#3a8ac8"/><path d="M49 84 L45 88" stroke="#fff" stroke-width="0.8"/>
<!-- icon3 gray squares -->
<g fill="none" stroke="#b9bcbe" stroke-width="1" shape-rendering="crispEdges">
<rect x="59.5" y="75.5" width="6" height="6"/><rect x="62.5" y="78.5" width="6" height="6"/>
</g>
<g stroke="#c4c8ca" stroke-width="1">
<path d="M57 73 L59.5 75.5 M68 73 L70.5 75.5 M57 86 L59.5 88.5 M68 86 L70.5 88.5"/>
</g>
<!-- icon4 vertical expand -->
<rect x="79" y="73" width="16" height="1" fill="#254b7c" shape-rendering="crispEdges"/>
<rect x="79" y="81" width="1" height="8" fill="url(#gbr)" shape-rendering="crispEdges"/>
<rect x="94" y="81" width="1" height="8" fill="url(#gbr)" shape-rendering="crispEdges"/>
<rect x="79" y="88" width="16" height="1" fill="#254b7c" shape-rendering="crispEdges"/>
<path d="M83.5 78.8 L87 75 L90.5 78.8Z" fill="#235a90"/>
<path d="M83.5 83 L87 86.8 L90.5 83Z" fill="#235a90"/>
<rect x="86.2" y="78" width="1.6" height="6" fill="#235a90"/>
<!-- icon5 horizontal expand -->
<rect x="108" y="79" width="14" height="10" fill="url(#gbox)" shape-rendering="crispEdges"/>
<path d="M108.5 89 V79.5 H121.5 V89" stroke="#2a72c4" stroke-width="1" fill="none" shape-rendering="crispEdges"/>
<path d="M108 75.5 L111 73 V78Z M110 75 H113 V76 H110Z" fill="#2a64b8"/>
<path d="M122 75.5 L119 73 V78Z M117 75 H120 V76 H117Z" fill="#2a90d0"/>
<!-- icon6 swap arrows -->
<path d="M131 80 H134 V76.5 Q134 75 136 75 H138 V76.5 H137 Q136.5 76.5 136.5 77.5 V80 H139 L135 84.5Z" fill="#2c5fc8"/>
<path d="M145 81.5 H142 V85 Q142 86.5 140 86.5 H138 V85 H139 Q139.5 85 139.5 84 V81.5 H137 L141 77.5Z" fill="#2c5fc8"/>
<!-- icon7 filter -->
<rect x="153" y="73" width="1" height="16" fill="#2c5ac8" shape-rendering="crispEdges"/>
<rect x="156" y="73" width="1" height="16" fill="#2c5ac8" shape-rendering="crispEdges"/>
<circle cx="153.5" cy="77.5" r="1.5" fill="#fff" stroke="#2c5ac8" stroke-width="1.3"/>
<rect x="155" y="81" width="3" height="3" fill="#ff2020" shape-rendering="crispEdges"/>
<rect x="156" y="82" width="1" height="1" fill="#fff" shape-rendering="crispEdges"/>
<path d="M157.5 74.5 H169.5 L164.5 80 V85.5 L163.5 87 L162.5 85.5 V80Z" fill="url(#gfun)" stroke="#2a5a8a" stroke-width="0.9"/>
<!-- icon8 -->
<path d="M185 81 L188.5 83.5 L185 86Z" fill="#26406e"/>
<rect x="190.5" y="75.5" width="3" height="11" fill="#fff" stroke="#e57a12" stroke-width="1" shape-rendering="crispEdges"/>
<!-- icon9 -->
<path d="M204 82 L206.5 86 L208.5 77.5 H211.5 V78.5" stroke="#1f4a90" stroke-width="1.2" fill="none"/>
<path d="M209.5 81 L213 83.5 L209.5 86Z" fill="#26406e"/>
<rect x="215.5" y="75.5" width="3" height="11" fill="#fff" stroke="#e57a12" stroke-width="1" shape-rendering="crispEdges"/>
<!-- icon10 gray -->
<path d="M228 82 L231 87 L233 78.5 H236 V79.5" stroke="#c0c4c6" stroke-width="1.1" fill="none"/>
<rect x="238.5" y="73.5" width="2" height="14" fill="#eef2f4" stroke="#c4c8ca" stroke-width="1" shape-rendering="crispEdges"/>
<!-- icon11 -->
<path d="M252 79 L255.5 84 L256.5 74.5 H260 V76" stroke="#1f4a90" stroke-width="1.2" fill="none"/>
<path d="M258 78 L261 80.5 L258 83Z" fill="#26406e"/>
<rect x="251.5" y="85.5" width="13" height="2" fill="#fff" stroke="#e57a12" stroke-width="1" shape-rendering="crispEdges"/>
<!-- icon12 -->
<path d="M274 76.5 L276 79 L276.5 73.5 H279 V74.5" stroke="#1f3e90" stroke-width="1" fill="none"/>
<path d="M278 76 H283 L280.5 79Z" fill="#e06a10"/>
<g fill="#2c4a7a" shape-rendering="crispEdges">
<rect x="275" y="81" width="1" height="7"/><rect x="277" y="81" width="1" height="7"/>
<rect x="280" y="81" width="1" height="7"/><rect x="282" y="81" width="1" height="7"/><rect x="280" y="87" width="3" height="1"/>
</g>
<rect x="285.5" y="74.5" width="2" height="13" fill="#fff" stroke="#2c4a7a" stroke-width="1" shape-rendering="crispEdges"/>
<!-- icon13 -->
<rect x="305" y="75" width="9" height="12" fill="#ffffff" shape-rendering="crispEdges"/>
<g fill="#2c4070" shape-rendering="crispEdges">
<rect x="302" y="74" width="1" height="13"/><rect x="304" y="74" width="1" height="13"/>
<rect x="314" y="74" width="1" height="13"/><rect x="316" y="74" width="1" height="13"/>
<rect x="307" y="78" width="1" height="1"/><rect x="307" y="80" width="1" height="1"/><rect x="307" y="82" width="1" height="1"/><rect x="307" y="84" width="1" height="1"/><rect x="307" y="86" width="1" height="1"/>
<rect x="311" y="78" width="1" height="1"/><rect x="311" y="80" width="1" height="1"/><rect x="311" y="82" width="1" height="1"/><rect x="311" y="84" width="1" height="1"/><rect x="311" y="86" width="1" height="1"/>
</g>
<path d="M306 73 H313 L309.5 77Z" fill="#5ac814"/>
<!-- icon14 AZ -->
<g stroke="#c0c4c6" stroke-width="1" fill="none">
<path d="M329.5 80.5 L332 74 L334.5 80.5 M330.5 78.5 H333.5 M329 80.5 H331 M333.5 80.5 H335"/>
<path d="M330 82.5 H334.5 L330 88.5 H334.5"/>
<path d="M340.5 74 V87"/>
</g>
<path d="M337 83 H344 L340.5 88Z" fill="#c0c4c6"/>
<!-- icon15 ZA -->
<g stroke="#c0c4c6" stroke-width="1" fill="none">
<path d="M352.5 74.5 H357 L352.5 80.5 H357"/>
<path d="M352 88.5 L354.5 82 L357 88.5 M353 86.5 H356 M351.5 88.5 H353.5 M356 88.5 H357.5"/>
<path d="M363.5 74 V87"/>
</g>
<path d="M360 83 H367 L363.5 88Z" fill="#c0c4c6"/>
<!-- icon16-18 align -->
<g fill="#b6babd" shape-rendering="crispEdges">
<rect x="382" y="74" width="12" height="1"/><rect x="382" y="76" width="12" height="1"/><rect x="382" y="78" width="12" height="1"/><rect x="382" y="80" width="12" height="1"/><rect x="382" y="82" width="12" height="1"/><rect x="382" y="84" width="12" height="1"/><rect x="382" y="86" width="12" height="1"/>
<rect x="406" y="74" width="10" height="1"/><rect x="407" y="76" width="8" height="1"/><rect x="406" y="78" width="10" height="1"/><rect x="407" y="80" width="8" height="1"/><rect x="406" y="82" width="10" height="1"/><rect x="407" y="84" width="8" height="1"/><rect x="406" y="86" width="10" height="1"/>
<rect x="428" y="74" width="12" height="1"/><rect x="428" y="76" width="12" height="1"/><rect x="428" y="78" width="12" height="1"/><rect x="428" y="80" width="12" height="1"/><rect x="428" y="82" width="12" height="1"/><rect x="428" y="84" width="12" height="1"/><rect x="428" y="86" width="12" height="1"/>
</g>
<!-- icon19 % -->
<path d="M456 87.5 L468 75" stroke="#b8bcbe" stroke-width="1"/>
<rect x="457.5" y="76.5" width="3" height="3" fill="none" stroke="#b8bcbe" stroke-width="1.2"/>
<rect x="463.5" y="82.5" width="3" height="3" fill="none" stroke="#b8bcbe" stroke-width="1.2"/>
<!-- icon20 +.0 .00 -->
<rect x="476" y="73" width="9" height="8" fill="#dfe6ea"/>
<path d="M480.5 73.8 V79.2 M477.8 76.5 H483.2" stroke="#bcc0c2" stroke-width="2.2"/>
<g fill="none" stroke="#bcc0c2" stroke-width="1.5">
<rect x="488.7" y="75.8" width="3" height="4.8" rx="1.4"/>
<rect x="482.7" y="82.3" width="3" height="4.8" rx="1.4"/><rect x="488.7" y="82.3" width="3" height="4.8" rx="1.4"/>
</g>
<g fill="#bcc0c2"><rect x="484.5" y="79" width="2" height="2"/><rect x="479" y="85" width="2" height="2"/></g>
<!-- icon21 -.0 .00 -->
<rect x="499" y="73" width="9" height="8" fill="#dfe6ea"/>
<rect x="500" y="75" width="7" height="2.5" fill="#c8ccce"/>
<g fill="none" stroke="#bcc0c2" stroke-width="1.5">
<rect x="511.7" y="75.8" width="3" height="4.8" rx="1.4"/>
<rect x="505.7" y="82.3" width="3" height="4.8" rx="1.4"/><rect x="511.7" y="82.3" width="3" height="4.8" rx="1.4"/>
</g>
<g fill="#bcc0c2"><rect x="507.5" y="79" width="2" height="2"/><rect x="502" y="85" width="2" height="2"/></g>
<!-- icon22 lock bars -->
<path d="M529.3 77.5 V75.8 Q529.3 73.3 531.5 73.3 Q533.7 73.3 533.7 75.8 V77.5" fill="none" stroke="#c0c4c6" stroke-width="1.3"/>
<rect x="528" y="77" width="7" height="4" rx="1" fill="#c4c8ca"/>
<rect x="531" y="78" width="1" height="2" fill="#e8eef0"/>
<g fill="#eef2f4" stroke="#c4c8ca" stroke-width="1" shape-rendering="crispEdges">
<rect x="530.5" y="80.5" width="2" height="7"/><rect x="536.5" y="75.5" width="2" height="12"/><rect x="540.5" y="75.5" width="2" height="12"/>
</g>
<!-- sigma -->
<path d="M554 75.7 H563 V77.2 M563 86.3 V84.5 M554 86.3 H563 M554.8 75.7 L559.2 81 L554.8 86.3" stroke="#b8bcbe" stroke-width="1.5" fill="none"/>
<!-- A -->
<text x="582" y="87" font-family="Liberation Serif" font-weight="bold" font-size="17.5" fill="#bfc3c5" text-anchor="middle">A</text>
<!-- icon25 -->
<rect x="597" y="73" width="8" height="7" fill="#d8dcde" stroke="#c8ccce" stroke-width="1"/>
<g fill="#eef2f4" stroke="#c4c8ca" stroke-width="1" shape-rendering="crispEdges">
<rect x="599.5" y="80.5" width="2" height="7"/><rect x="604.5" y="74.5" width="2" height="13"/><rect x="609.5" y="74.5" width="2" height="13"/>
</g>
<!-- icon26 chart -->
<rect x="620" y="73" width="17" height="17" fill="#ffffff" shape-rendering="crispEdges"/>
<rect x="620" y="73" width="3" height="17" fill="#a9b5c9" shape-rendering="crispEdges"/>
<rect x="620" y="73" width="17" height="1" fill="#a9b5c9" shape-rendering="crispEdges"/>
<rect x="636" y="73" width="1" height="17" fill="#1f3a6a" shape-rendering="crispEdges"/>
<rect x="621" y="89" width="16" height="1" fill="#1f3a6a" shape-rendering="crispEdges"/>
<path d="M623 89 V80.5 L626 78 L627 78.5 V89Z" fill="#d85a5a"/>
<path d="M627 89 V76 L630 74 L631 74.5 V89Z" fill="#c4d0f0" stroke="#3a5ac0" stroke-width="0.7"/>
<path d="M631.3 89 V80.5 L634.3 78.5 L635.3 79 V89Z" fill="#a8bc48"/>
<!-- icon25 fix -->
<!-- icon27 -->
<rect x="651" y="76" width="10" height="10" rx="1" fill="#c4c8cb"/>
<!-- customize -->
<rect x="1089" y="84" width="6" height="1.6" fill="#000"/>
<path d="M1088.5 87 H1095.5 L1092 90.5Z" fill="#000"/>
</svg>

<div style="position:absolute;left:2px;top:1px;width:1096px;height:705px;border:1px solid #8f9ba1;box-sizing:border-box;"></div>
<div style="position:absolute;left:1098px;top:0;width:1px;height:707px;background:#dde8ee"></div>
</body></html>
